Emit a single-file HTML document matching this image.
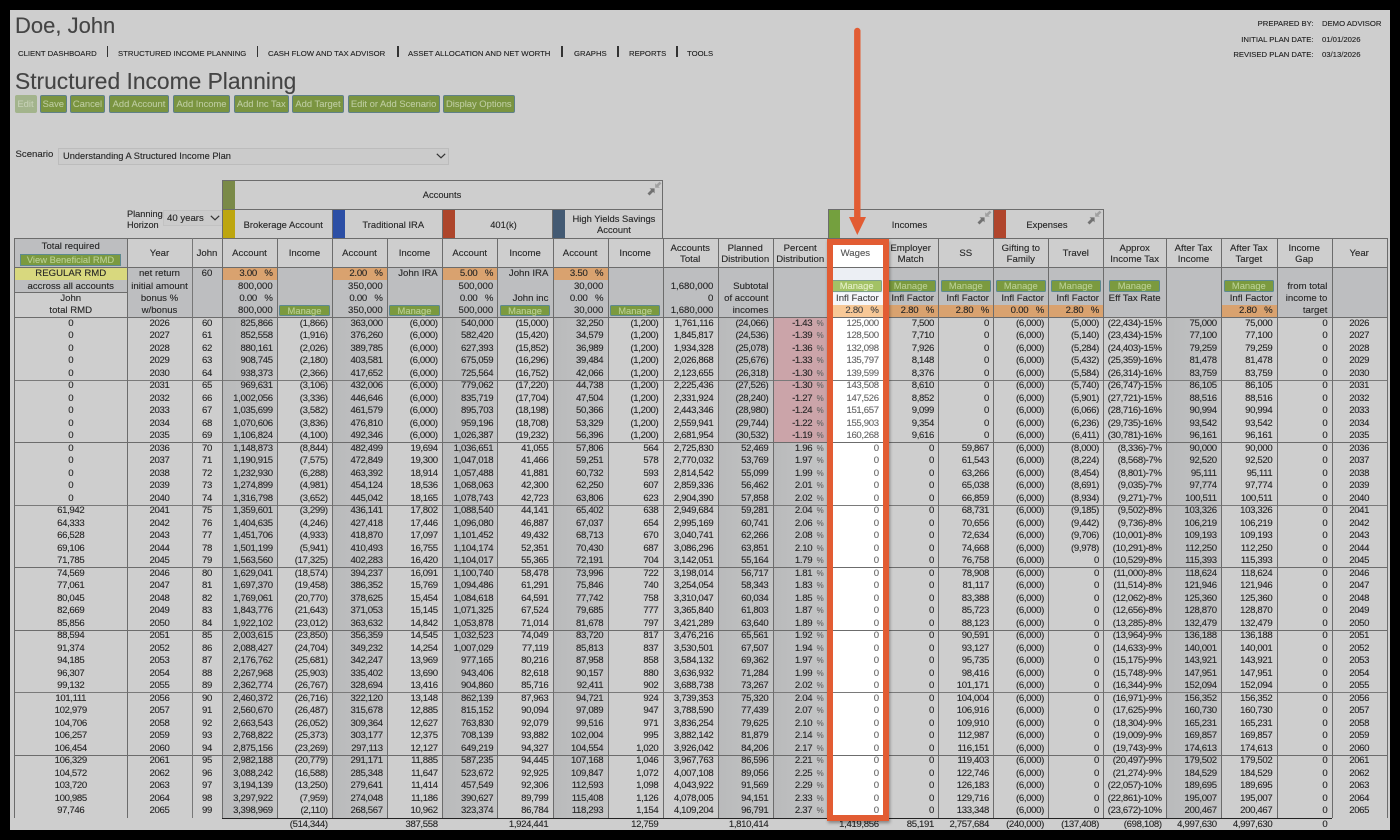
<!DOCTYPE html>
<html><head><meta charset="utf-8"><title>Structured Income Planning</title>
<style>
html,body{margin:0;padding:0;background:#000;width:1400px;height:840px;overflow:hidden}
#p{position:absolute;left:10px;top:9.5px;width:1380px;height:820.5px;background:#cecece}
#w{position:absolute;left:0;top:0;width:1400px;height:840px;overflow:hidden;font-family:"Liberation Sans",Arial,sans-serif;color:#262626;font-size:9.6px;-webkit-text-stroke:.12px currentColor}
#w div{position:absolute;white-space:nowrap}
.n{font-size:7.75px;top:48.5px;line-height:10px;color:#222}
.ns{width:1.5px;height:11px;top:46px;background:#333}
.b{top:95px;height:16.4px;line-height:16.4px;text-align:center;background:#7a9440;border:1px solid #5f8088;border-radius:2px;color:#bccb9e;font-size:9.4px}
.rh{font-size:7.7px;color:#222;line-height:10px}
.bg{background:#bdbec0}
.dk{background:linear-gradient(90deg,#b9babb,#c3c4c5)}
.or{background:#d9a26f}
.hl{background:#6c6c6c;height:1px}
.v{background:#6c6c6c;width:1px}
.c0{left:14.5px;width:112.5px}.c1{left:127px;width:65px}.c2{left:192px;width:30px}
.a1{left:222px;width:55px}.i1{left:277px;width:55px}.a2{left:332px;width:55px}.i2{left:387px;width:55px}
.a3{left:442px;width:55.5px}.i3{left:497.5px;width:55.2px}.a4{left:552.7px;width:54.9px}.i4{left:607.6px;width:55.1px}
.tt{left:662.7px;width:55px}.pl{left:717.7px;width:55px}.pc{left:772.7px;width:55px}.wg{left:827.7px;width:55.3px}
.em{left:883px;width:55.3px}.ss{left:938.3px;width:55px}.gf{left:993.3px;width:55px}.tr{left:1048.3px;width:55px}
.tx{left:1103.3px;width:62.7px}.ai{left:1166px;width:55px}.tg{left:1221px;width:55.7px}.gp{left:1276.7px;width:55px}.y2{left:1331.7px;width:55px}
.R{text-align:right;padding-right:4.3px;box-sizing:border-box}
.C{text-align:center}
.d{top:317.5px;line-height:12.5px;letter-spacing:-.35px}
.f{top:818.5px;line-height:12.5px;letter-spacing:-.35px}
.t1{top:268.3px;line-height:12.4px}.t2{top:280.8px;line-height:12.4px}.t3{top:293px;line-height:12.4px}.t4{top:305.4px;line-height:12.4px}
.h1{top:238.5px;line-height:29px}.h2{top:242.6px;line-height:11px}
.pp{word-spacing:5px;letter-spacing:-.25px}
.m{display:inline-block;box-sizing:border-box;width:50.6px;height:11.6px;line-height:10px;background:#7b9a3f;border:1px solid #5d8a90;border-radius:1.5px;color:#b9cf93;font-size:9.4px;vertical-align:top;margin-top:-.6px}
.sw{width:12.5px;height:28.5px;top:209.5px}
.lb{font-size:9.4px;text-align:center}
</style></head><body>
<div id="w">
<div id="p"></div>

<div style="left:15px;top:13px;font-size:22px;line-height:26px;color:#444">Doe, John</div>
<div style="left:15px;top:68px;font-size:22.8px;line-height:27px;color:#444">Structured Income Planning</div>

<div class="n" style="left:18px">CLIENT DASHBOARD</div><div class="ns" style="left:106.5px"></div>
<div class="n" style="left:118px">STRUCTURED INCOME PLANNING</div><div class="ns" style="left:256.5px"></div>
<div class="n" style="left:268px">CASH FLOW AND TAX ADVISOR</div><div class="ns" style="left:397px"></div>
<div class="n" style="left:408px">ASSET ALLOCATION AND NET WORTH</div><div class="ns" style="left:561px"></div>
<div class="n" style="left:574px">GRAPHS</div><div class="ns" style="left:617px"></div>
<div class="n" style="left:629px">REPORTS</div><div class="ns" style="left:676px"></div>
<div class="n" style="left:687px">TOOLS</div>

<div class="rh" style="right:86.5px;top:18.5px">PREPARED BY:</div><div class="rh" style="left:1322px;top:18.5px">DEMO ADVISOR</div>
<div class="rh" style="right:86.5px;top:34.5px">INITIAL PLAN DATE:</div><div class="rh" style="left:1322px;top:34.5px">01/01/2026</div>
<div class="rh" style="right:86.5px;top:50px">REVISED PLAN DATE:</div><div class="rh" style="left:1322px;top:50px">03/13/2026</div>

<div class="b" style="left:14.5px;width:20px;background:#a3b48c;border-color:#a3b48c;color:#c6d0b6">Edit</div>
<div class="b" style="left:39.6px;width:25.5px">Save</div>
<div class="b" style="left:70px;width:33px">Cancel</div>
<div class="b" style="left:109px;width:58px">Add Account</div>
<div class="b" style="left:173px;width:55px">Add Income</div>
<div class="b" style="left:233.5px;width:53.5px">Add Inc Tax</div>
<div class="b" style="left:292px;width:50px">Add Target</div>
<div class="b" style="left:347.6px;width:90px">Edit or Add Scenario</div>
<div class="b" style="left:442.8px;width:70px">Display Options</div>

<div style="left:15.5px;top:149px;line-height:11px;font-size:9.6px">Scenario</div>
<div style="left:58px;top:148px;width:389px;height:14.6px;line-height:15px;background:#cbcbcb;border:1px solid #bcbcbc;font-size:9.3px"><span style="margin-left:4px">Understanding A Structured Income Plan</span></div>
<svg style="position:absolute;left:436px;top:153px" width="10" height="6"><path d="M.8 .8L5 4.8L9.2 .8" fill="none" stroke="#333" stroke-width="1.2"/></svg>

<div style="left:127px;top:208.6px;line-height:11.4px;font-size:9.2px">Planning<br>Horizon</div>
<div style="left:163px;top:209.5px;width:57.5px;height:14px;line-height:15px;background:#cbcbcb;border:1px solid #c2c2c2;font-size:9.6px"><span style="margin-left:3px">40 years</span></div>
<svg style="position:absolute;left:210px;top:215px" width="10" height="6"><path d="M.8 .8L5 4.8L9.2 .8" fill="none" stroke="#333" stroke-width="1.2"/></svg>

<!-- group headers -->
<div style="left:222px;top:180px;width:12.5px;height:29.5px;background:#7a8a48"></div>
<div class="sw" style="left:222px;background:#bda60f"></div>
<div class="sw" style="left:332px;background:#2c4fa5"></div>
<div class="sw" style="left:442px;background:#ad452b"></div>
<div class="sw" style="left:552.7px;background:#435a73"></div>
<div class="sw" style="left:827.7px;background:#74a03e"></div>
<div class="sw" style="left:993.3px;background:#b0452c"></div>
<div class="hl" style="left:222px;top:180px;width:441px"></div>
<div class="hl" style="left:222px;top:209px;width:441px"></div>
<div class="hl" style="left:828px;top:209px;width:276px"></div>
<div class="v" style="left:222px;top:180px;height:58px"></div>
<div class="v" style="left:662px;top:180px;height:58px"></div>
<div class="v" style="left:332px;top:209px;height:29px"></div>
<div class="v" style="left:442px;top:209px;height:29px"></div>
<div class="v" style="left:552px;top:209px;height:29px"></div>
<div class="v" style="left:828px;top:209px;height:29px"></div>
<div class="v" style="left:993px;top:209px;height:29px"></div>
<div class="v" style="left:1103px;top:209px;height:29px"></div>
<div class="lb" style="left:222px;width:440px;top:189px;line-height:11px">Accounts</div>
<div class="lb" style="left:234.5px;width:97.5px;top:218.5px;line-height:11px">Brokerage Account</div>
<div class="lb" style="left:344.5px;width:97.5px;top:218.5px;line-height:11px">Traditional IRA</div>
<div class="lb" style="left:454.5px;width:98px;top:218.5px;line-height:11px">401(k)</div>
<div class="lb" style="left:565.2px;width:97.5px;top:212.5px;line-height:11.2px">High Yields Savings<br>Account</div>
<div class="lb" style="left:828px;width:163px;top:218.5px;line-height:11px">Incomes</div>
<div class="lb" style="left:993px;width:108px;top:218.5px;line-height:11px">Expenses</div>
<svg style="position:absolute;left:647px;top:181px" width="15" height="15"><path d="M1.5 13.5L5.5 9.5" stroke="#727272" stroke-width="2.8" fill="none"/><path d="M7.6 7.4H2.6L7.6 12.4Z" fill="#727272"/><path d="M13.5 1.5L9.8 5.2" stroke="#a0a0a0" stroke-width="2.6" fill="none"/><path d="M8.2 6.8H12.8L8.2 2.2Z" fill="#a0a0a0"/></svg>
<svg style="position:absolute;left:977px;top:210px" width="15" height="15"><path d="M1.5 13.5L5.5 9.5" stroke="#727272" stroke-width="2.8" fill="none"/><path d="M7.6 7.4H2.6L7.6 12.4Z" fill="#727272"/><path d="M13.5 1.5L9.8 5.2" stroke="#a0a0a0" stroke-width="2.6" fill="none"/><path d="M8.2 6.8H12.8L8.2 2.2Z" fill="#a0a0a0"/></svg>
<svg style="position:absolute;left:1087px;top:210px" width="15" height="15"><path d="M1.5 13.5L5.5 9.5" stroke="#727272" stroke-width="2.8" fill="none"/><path d="M7.6 7.4H2.6L7.6 12.4Z" fill="#727272"/><path d="M13.5 1.5L9.8 5.2" stroke="#a0a0a0" stroke-width="2.6" fill="none"/><path d="M8.2 6.8H12.8L8.2 2.2Z" fill="#a0a0a0"/></svg>

<!-- backgrounds -->
<div class="bg" style="left:14.5px;top:238px;width:112.5px;height:29.5px"></div>
<div class="bg" style="left:14.5px;top:267.5px;width:1372.2px;height:50px"></div>
<div style="left:14.5px;top:292.5px;width:112.5px;height:25px;background:#cecece"></div>
<div style="left:14.5px;top:267.5px;width:112.5px;height:12.5px;background:#d8d87e"></div>
<div class="or" style="left:222px;top:267.5px;width:55px;height:12.5px"></div>
<div class="or" style="left:332px;top:267.5px;width:55px;height:12.5px"></div>
<div class="or" style="left:442px;top:267.5px;width:55.5px;height:12.5px"></div>
<div class="or" style="left:552.7px;top:267.5px;width:55px;height:12.5px"></div>
<div class="or" style="left:883px;top:305px;width:220.3px;height:12.5px"></div>
<div class="or" style="left:1221px;top:305px;width:55.7px;height:12.5px"></div>
<div class="dk" style="left:222px;top:318px;width:55px;height:500px"></div>
<div class="dk" style="left:332px;top:318px;width:55px;height:500px"></div>
<div class="dk" style="left:442px;top:318px;width:55.5px;height:500px"></div>
<div class="dk" style="left:552.7px;top:318px;width:55px;height:500px"></div>
<div class="dk" style="left:717.7px;top:318px;width:55px;height:500px"></div>
<div class="dk" style="left:772.7px;top:318px;width:55px;height:500px"></div>
<div class="dk" style="left:1166px;top:318px;width:55px;height:500px"></div>
<div style="left:772.7px;top:318px;width:55px;height:124px;background:#cba4a9"></div>
<!-- wages spotlight -->
<div style="left:830px;top:238px;width:55px;height:580px;background:#fff"></div>
<div style="left:833px;top:267.5px;width:50px;height:25px;background:#eceff4"></div>
<div style="left:833px;top:292.5px;width:50px;height:12.5px;background:#f5f6fa"></div>
<div style="left:833px;top:305px;width:50px;height:12.5px;background:#f7c897"></div>

<!-- horizontal lines -->
<div class="hl" style="left:14px;top:238px;width:1373px"></div>
<div class="hl" style="left:14px;top:267px;width:1373px"></div>
<div class="hl" style="left:14px;top:317px;width:1373px"></div>
<div class="hl" style="left:14px;top:292px;width:113px"></div>
<div class="hl" style="left:14px;top:380px;width:1373px;background:#7a7a7a"></div>
<div class="hl" style="left:14px;top:442px;width:1373px"></div>
<div class="hl" style="left:14px;top:505px;width:1373px;background:#7a7a7a"></div>
<div class="hl" style="left:14px;top:567px;width:1373px"></div>
<div class="hl" style="left:14px;top:630px;width:1373px"></div>
<div class="hl" style="left:14px;top:692px;width:1373px;background:#7a7a7a"></div>
<div class="hl" style="left:14px;top:755px;width:1373px"></div>
<div style="left:222px;top:817.5px;width:1110px;height:1.6px;background:#222"></div>
<!-- vertical lines -->
<div class="v" style="left:14px;top:238px;height:580px"></div>
<div class="v" style="left:126.5px;top:238px;height:580px;width:1.5px"></div>
<div class="v" style="left:191.5px;top:238px;height:580px;width:1px;background:#777"></div>
<div class="v" style="left:221.5px;top:238px;height:580px"></div>
<div class="v" style="left:277px;top:238px;height:580px"></div>
<div class="v" style="left:332px;top:238px;height:580px"></div>
<div class="v" style="left:387px;top:238px;height:580px"></div>
<div class="v" style="left:442px;top:238px;height:580px"></div>
<div class="v" style="left:497px;top:238px;height:580px"></div>
<div class="v" style="left:552.5px;top:238px;height:580px"></div>
<div class="v" style="left:607.5px;top:238px;height:580px"></div>
<div class="v" style="left:662.5px;top:238px;height:580px"></div>
<div class="v" style="left:717.5px;top:238px;height:580px"></div>
<div class="v" style="left:772.5px;top:238px;height:580px"></div>
<div class="v" style="left:938px;top:238px;height:580px"></div>
<div class="v" style="left:993px;top:238px;height:580px"></div>
<div class="v" style="left:1048px;top:238px;height:580px"></div>
<div class="v" style="left:1103px;top:238px;height:580px"></div>
<div class="v" style="left:1166px;top:238px;height:580px"></div>
<div class="v" style="left:1221px;top:238px;height:580px"></div>
<div class="v" style="left:1276.5px;top:238px;height:580px"></div>
<div class="v" style="left:1331.5px;top:238px;height:580px"></div>
<div class="v" style="left:1386.5px;top:238px;height:580px"></div>

<!-- header row -->
<div class="c0 C" style="top:241px;line-height:11px">Total required</div>
<div class="C" style="left:20px;width:99px;top:254.3px;height:10px;line-height:10.4px;background:#7b9a3f;border:1px solid #5d8a90;color:#b9cf93;font-size:9.4px">View Beneficial RMD</div>
<div class="c1 C h1">Year</div><div class="c2 C h1">John</div>
<div class="a1 C h1">Account</div><div class="i1 C h1">Income</div>
<div class="a2 C h1">Account</div><div class="i2 C h1">Income</div>
<div class="a3 C h1">Account</div><div class="i3 C h1">Income</div>
<div class="a4 C h1">Account</div><div class="i4 C h1">Income</div>
<div class="tt C h2">Accounts<br>Total</div><div class="pl C h2">Planned<br>Distribution</div><div class="pc C h2">Percent<br>Distribution</div>
<div class="wg C h1" style="color:#555">Wages</div>
<div class="em C h2">Employer<br>Match</div><div class="ss C h1">SS</div><div class="gf C h2">Gifting to<br>Family</div><div class="tr C h1">Travel</div>
<div class="tx C h2">Approx<br>Income Tax</div><div class="ai C h2">After Tax<br>Income</div><div class="tg C h2">After Tax<br>Target</div><div class="gp C h2">Income<br>Gap</div><div class="y2 C h1">Year</div>

<!-- input rows -->
<div class="c0 C t1">REGULAR RMD</div><div class="c0 C t2">accross all accounts</div><div class="c0 C t3">John</div><div class="c0 C t4">total RMD</div>
<div class="c1 C t1">net return</div><div class="c1 C t2">initial amount</div><div class="c1 C t3">bonus %</div><div class="c1 C t4">w/bonus</div>
<div class="c2 C t1">60</div>
<div class="a1 R t1 pp">3.00 %</div><div class="a1 R t2">800,000</div><div class="a1 R t3 pp">0.00 %</div><div class="a1 R t4">800,000</div>
<div class="i1 C t4"><span class="m">Manage</span></div>
<div class="a2 R t1 pp">2.00 %</div><div class="a2 R t2">350,000</div><div class="a2 R t3 pp">0.00 %</div><div class="a2 R t4">350,000</div>
<div class="i2 R t1">John IRA</div><div class="i2 C t4"><span class="m">Manage</span></div>
<div class="a3 R t1 pp">5.00 %</div><div class="a3 R t2">500,000</div><div class="a3 R t3 pp">0.00 %</div><div class="a3 R t4">500,000</div>
<div class="i3 R t1">John IRA</div><div class="i3 R t3">John inc</div><div class="i3 C t4"><span class="m">Manage</span></div>
<div class="a4 R t1 pp">3.50 %</div><div class="a4 R t2">30,000</div><div class="a4 R t3 pp">0.00 %</div><div class="a4 R t4">30,000</div>
<div class="i4 C t4"><span class="m">Manage</span></div>
<div class="tt R t2">1,680,000</div><div class="tt R t3">0</div><div class="tt R t4">1,680,000</div>
<div class="pl R t2">Subtotal</div><div class="pl R t3">of account</div><div class="pl R t4">incomes</div>
<div class="wg C t2" style="left:829px"><span class="m" style="background:#a3c265;color:#e4efc8;border-color:#7da08a">Manage</span></div><div class="wg R t3" style="color:#444">Infl Factor</div><div class="wg R t4 pp" style="color:#444">2.80 %</div>
<div class="em C t2"><span class="m">Manage</span></div><div class="em R t3">Infl Factor</div><div class="em R t4 pp">2.80 %</div>
<div class="ss C t2"><span class="m">Manage</span></div><div class="ss R t3">Infl Factor</div><div class="ss R t4 pp">2.80 %</div>
<div class="gf C t2"><span class="m">Manage</span></div><div class="gf R t3">Infl Factor</div><div class="gf R t4 pp">0.00 %</div>
<div class="tr C t2"><span class="m">Manage</span></div><div class="tr R t3">Infl Factor</div><div class="tr R t4 pp">2.80 %</div>
<div class="tx C t2"><span class="m">Manage</span></div><div class="tx C t3">Eff Tax Rate</div>
<div class="tg C t2"><span class="m">Manage</span></div><div class="tg R t3">Infl Factor</div><div class="tg R t4 pp">2.80 %</div>
<div class="gp R t2">from total</div><div class="gp R t3">income to</div><div class="gp R t4">target</div>

<!-- data -->
<div class="c0 C d">0<br>0<br>0<br>0<br>0<br>0<br>0<br>0<br>0<br>0<br>0<br>0<br>0<br>0<br>0<br>61,942<br>64,333<br>66,528<br>69,106<br>71,785<br>74,569<br>77,061<br>80,045<br>82,669<br>85,856<br>88,594<br>91,374<br>94,185<br>96,307<br>99,132<br>101,111<br>102,979<br>104,706<br>106,257<br>106,454<br>106,329<br>104,572<br>103,720<br>100,985<br>97,746</div>
<div class="c1 C d">2026<br>2027<br>2028<br>2029<br>2030<br>2031<br>2032<br>2033<br>2034<br>2035<br>2036<br>2037<br>2038<br>2039<br>2040<br>2041<br>2042<br>2043<br>2044<br>2045<br>2046<br>2047<br>2048<br>2049<br>2050<br>2051<br>2052<br>2053<br>2054<br>2055<br>2056<br>2057<br>2058<br>2059<br>2060<br>2061<br>2062<br>2063<br>2064<br>2065</div>
<div class="c2 C d">60<br>61<br>62<br>63<br>64<br>65<br>66<br>67<br>68<br>69<br>70<br>71<br>72<br>73<br>74<br>75<br>76<br>77<br>78<br>79<br>80<br>81<br>82<br>83<br>84<br>85<br>86<br>87<br>88<br>89<br>90<br>91<br>92<br>93<br>94<br>95<br>96<br>97<br>98<br>99</div>
<div class="a1 R d">825,866<br>852,558<br>880,161<br>908,745<br>938,373<br>969,631<br>1,002,056<br>1,035,699<br>1,070,606<br>1,106,824<br>1,148,873<br>1,190,915<br>1,232,930<br>1,274,899<br>1,316,798<br>1,359,601<br>1,404,635<br>1,451,706<br>1,501,199<br>1,563,560<br>1,629,041<br>1,697,370<br>1,769,061<br>1,843,776<br>1,922,102<br>2,003,615<br>2,088,427<br>2,176,762<br>2,267,968<br>2,362,774<br>2,460,372<br>2,560,670<br>2,663,543<br>2,768,822<br>2,875,156<br>2,982,188<br>3,088,242<br>3,194,139<br>3,297,922<br>3,398,969</div>
<div class="i1 R d">(1,866)<br>(1,916)<br>(2,026)<br>(2,180)<br>(2,366)<br>(3,106)<br>(3,336)<br>(3,582)<br>(3,836)<br>(4,100)<br>(8,844)<br>(7,575)<br>(6,288)<br>(4,981)<br>(3,652)<br>(3,299)<br>(4,246)<br>(4,933)<br>(5,941)<br>(17,325)<br>(18,574)<br>(19,458)<br>(20,770)<br>(21,643)<br>(23,012)<br>(23,850)<br>(24,704)<br>(25,681)<br>(25,903)<br>(26,767)<br>(26,716)<br>(26,487)<br>(26,052)<br>(25,373)<br>(23,269)<br>(20,779)<br>(16,588)<br>(13,250)<br>(7,959)<br>(2,110)</div>
<div class="a2 R d">363,000<br>376,260<br>389,785<br>403,581<br>417,652<br>432,006<br>446,646<br>461,579<br>476,810<br>492,346<br>482,499<br>472,849<br>463,392<br>454,124<br>445,042<br>436,141<br>427,418<br>418,870<br>410,493<br>402,283<br>394,237<br>386,352<br>378,625<br>371,053<br>363,632<br>356,359<br>349,232<br>342,247<br>335,402<br>328,694<br>322,120<br>315,678<br>309,364<br>303,177<br>297,113<br>291,171<br>285,348<br>279,641<br>274,048<br>268,567</div>
<div class="i2 R d">(6,000)<br>(6,000)<br>(6,000)<br>(6,000)<br>(6,000)<br>(6,000)<br>(6,000)<br>(6,000)<br>(6,000)<br>(6,000)<br>19,694<br>19,300<br>18,914<br>18,536<br>18,165<br>17,802<br>17,446<br>17,097<br>16,755<br>16,420<br>16,091<br>15,769<br>15,454<br>15,145<br>14,842<br>14,545<br>14,254<br>13,969<br>13,690<br>13,416<br>13,148<br>12,885<br>12,627<br>12,375<br>12,127<br>11,885<br>11,647<br>11,414<br>11,186<br>10,962</div>
<div class="a3 R d">540,000<br>582,420<br>627,393<br>675,059<br>725,564<br>779,062<br>835,719<br>895,703<br>959,196<br>1,026,387<br>1,036,651<br>1,047,018<br>1,057,488<br>1,068,063<br>1,078,743<br>1,088,540<br>1,096,080<br>1,101,452<br>1,104,174<br>1,104,017<br>1,100,740<br>1,094,486<br>1,084,618<br>1,071,325<br>1,053,878<br>1,032,523<br>1,007,029<br>977,165<br>943,406<br>904,860<br>862,139<br>815,152<br>763,830<br>708,139<br>649,219<br>587,235<br>523,672<br>457,549<br>390,627<br>323,374</div>
<div class="i3 R d">(15,000)<br>(15,420)<br>(15,852)<br>(16,296)<br>(16,752)<br>(17,220)<br>(17,704)<br>(18,198)<br>(18,708)<br>(19,232)<br>41,055<br>41,466<br>41,881<br>42,300<br>42,723<br>44,141<br>46,887<br>49,432<br>52,351<br>55,365<br>58,478<br>61,291<br>64,591<br>67,524<br>71,014<br>74,049<br>77,119<br>80,216<br>82,618<br>85,716<br>87,963<br>90,094<br>92,079<br>93,882<br>94,327<br>94,445<br>92,925<br>92,306<br>89,799<br>86,784</div>
<div class="a4 R d">32,250<br>34,579<br>36,989<br>39,484<br>42,066<br>44,738<br>47,504<br>50,366<br>53,329<br>56,396<br>57,806<br>59,251<br>60,732<br>62,250<br>63,806<br>65,402<br>67,037<br>68,713<br>70,430<br>72,191<br>73,996<br>75,846<br>77,742<br>79,685<br>81,678<br>83,720<br>85,813<br>87,958<br>90,157<br>92,411<br>94,721<br>97,089<br>99,516<br>102,004<br>104,554<br>107,168<br>109,847<br>112,593<br>115,408<br>118,293</div>
<div class="i4 R d">(1,200)<br>(1,200)<br>(1,200)<br>(1,200)<br>(1,200)<br>(1,200)<br>(1,200)<br>(1,200)<br>(1,200)<br>(1,200)<br>564<br>578<br>593<br>607<br>623<br>638<br>654<br>670<br>687<br>704<br>722<br>740<br>758<br>777<br>797<br>817<br>837<br>858<br>880<br>902<br>924<br>947<br>971<br>995<br>1,020<br>1,046<br>1,072<br>1,098<br>1,126<br>1,154</div>
<div class="tt R d">1,761,116<br>1,845,817<br>1,934,328<br>2,026,868<br>2,123,655<br>2,225,436<br>2,331,924<br>2,443,346<br>2,559,941<br>2,681,954<br>2,725,830<br>2,770,032<br>2,814,542<br>2,859,336<br>2,904,390<br>2,949,684<br>2,995,169<br>3,040,741<br>3,086,296<br>3,142,051<br>3,198,014<br>3,254,054<br>3,310,047<br>3,365,840<br>3,421,289<br>3,476,216<br>3,530,501<br>3,584,132<br>3,636,932<br>3,688,738<br>3,739,353<br>3,788,590<br>3,836,254<br>3,882,142<br>3,926,042<br>3,967,763<br>4,007,108<br>4,043,922<br>4,078,005<br>4,109,204</div>
<div class="pl R d">(24,066)<br>(24,536)<br>(25,078)<br>(25,676)<br>(26,318)<br>(27,526)<br>(28,240)<br>(28,980)<br>(29,744)<br>(30,532)<br>52,469<br>53,769<br>55,099<br>56,462<br>57,858<br>59,281<br>60,741<br>62,266<br>63,851<br>55,164<br>56,717<br>58,343<br>60,034<br>61,803<br>63,640<br>65,561<br>67,507<br>69,362<br>71,284<br>73,267<br>75,320<br>77,439<br>79,625<br>81,879<br>84,206<br>86,596<br>89,056<br>91,569<br>94,151<br>96,791</div>
<div class="pc R d" style="padding-right:15.5px">-1.43<br>-1.39<br>-1.36<br>-1.33<br>-1.30<br>-1.30<br>-1.27<br>-1.24<br>-1.22<br>-1.19<br>1.96<br>1.97<br>1.99<br>2.01<br>2.02<br>2.04<br>2.06<br>2.08<br>2.10<br>1.79<br>1.81<br>1.83<br>1.85<br>1.87<br>1.89<br>1.92<br>1.94<br>1.97<br>1.99<br>2.02<br>2.04<br>2.07<br>2.10<br>2.14<br>2.17<br>2.21<br>2.25<br>2.29<br>2.33<br>2.37</div>
<div class="pc R d" style="color:#666;font-size:8px">%<br>%<br>%<br>%<br>%<br>%<br>%<br>%<br>%<br>%<br>%<br>%<br>%<br>%<br>%<br>%<br>%<br>%<br>%<br>%<br>%<br>%<br>%<br>%<br>%<br>%<br>%<br>%<br>%<br>%<br>%<br>%<br>%<br>%<br>%<br>%<br>%<br>%<br>%<br>%</div>
<div class="wg R d" style="color:#666">125,000<br>128,500<br>132,098<br>135,797<br>139,599<br>143,508<br>147,526<br>151,657<br>155,903<br>160,268<br>0<br>0<br>0<br>0<br>0<br>0<br>0<br>0<br>0<br>0<br>0<br>0<br>0<br>0<br>0<br>0<br>0<br>0<br>0<br>0<br>0<br>0<br>0<br>0<br>0<br>0<br>0<br>0<br>0<br>0</div>
<div class="em R d">7,500<br>7,710<br>7,926<br>8,148<br>8,376<br>8,610<br>8,852<br>9,099<br>9,354<br>9,616<br>0<br>0<br>0<br>0<br>0<br>0<br>0<br>0<br>0<br>0<br>0<br>0<br>0<br>0<br>0<br>0<br>0<br>0<br>0<br>0<br>0<br>0<br>0<br>0<br>0<br>0<br>0<br>0<br>0<br>0</div>
<div class="ss R d">0<br>0<br>0<br>0<br>0<br>0<br>0<br>0<br>0<br>0<br>59,867<br>61,543<br>63,266<br>65,038<br>66,859<br>68,731<br>70,656<br>72,634<br>74,668<br>76,758<br>78,908<br>81,117<br>83,388<br>85,723<br>88,123<br>90,591<br>93,127<br>95,735<br>98,416<br>101,171<br>104,004<br>106,916<br>109,910<br>112,987<br>116,151<br>119,403<br>122,746<br>126,183<br>129,716<br>133,348</div>
<div class="gf R d">(6,000)<br>(6,000)<br>(6,000)<br>(6,000)<br>(6,000)<br>(6,000)<br>(6,000)<br>(6,000)<br>(6,000)<br>(6,000)<br>(6,000)<br>(6,000)<br>(6,000)<br>(6,000)<br>(6,000)<br>(6,000)<br>(6,000)<br>(6,000)<br>(6,000)<br>(6,000)<br>(6,000)<br>(6,000)<br>(6,000)<br>(6,000)<br>(6,000)<br>(6,000)<br>(6,000)<br>(6,000)<br>(6,000)<br>(6,000)<br>(6,000)<br>(6,000)<br>(6,000)<br>(6,000)<br>(6,000)<br>(6,000)<br>(6,000)<br>(6,000)<br>(6,000)<br>(6,000)</div>
<div class="tr R d">(5,000)<br>(5,140)<br>(5,284)<br>(5,432)<br>(5,584)<br>(5,740)<br>(5,901)<br>(6,066)<br>(6,236)<br>(6,411)<br>(8,000)<br>(8,224)<br>(8,454)<br>(8,691)<br>(8,934)<br>(9,185)<br>(9,442)<br>(9,706)<br>(9,978)<br>0<br>0<br>0<br>0<br>0<br>0<br>0<br>0<br>0<br>0<br>0<br>0<br>0<br>0<br>0<br>0<br>0<br>0<br>0<br>0<br>0</div>
<div class="tx R d">(22,434)-15%<br>(23,434)-15%<br>(24,403)-15%<br>(25,359)-16%<br>(26,314)-16%<br>(26,747)-15%<br>(27,721)-15%<br>(28,716)-16%<br>(29,735)-16%<br>(30,781)-16%<br>(8,336)-7%<br>(8,568)-7%<br>(8,801)-7%<br>(9,035)-7%<br>(9,271)-7%<br>(9,502)-8%<br>(9,736)-8%<br>(10,001)-8%<br>(10,291)-8%<br>(10,529)-8%<br>(11,000)-8%<br>(11,514)-8%<br>(12,062)-8%<br>(12,656)-8%<br>(13,285)-8%<br>(13,964)-9%<br>(14,633)-9%<br>(15,175)-9%<br>(15,748)-9%<br>(16,344)-9%<br>(16,971)-9%<br>(17,625)-9%<br>(18,304)-9%<br>(19,009)-9%<br>(19,743)-9%<br>(20,497)-9%<br>(21,274)-9%<br>(22,057)-10%<br>(22,861)-10%<br>(23,672)-10%</div>
<div class="ai R d">75,000<br>77,100<br>79,259<br>81,478<br>83,759<br>86,105<br>88,516<br>90,994<br>93,542<br>96,161<br>90,000<br>92,520<br>95,111<br>97,774<br>100,511<br>103,326<br>106,219<br>109,193<br>112,250<br>115,393<br>118,624<br>121,946<br>125,360<br>128,870<br>132,479<br>136,188<br>140,001<br>143,921<br>147,951<br>152,094<br>156,352<br>160,730<br>165,231<br>169,857<br>174,613<br>179,502<br>184,529<br>189,695<br>195,007<br>200,467</div>
<div class="tg R d">75,000<br>77,100<br>79,259<br>81,478<br>83,759<br>86,105<br>88,516<br>90,994<br>93,542<br>96,161<br>90,000<br>92,520<br>95,111<br>97,774<br>100,511<br>103,326<br>106,219<br>109,193<br>112,250<br>115,393<br>118,624<br>121,946<br>125,360<br>128,870<br>132,479<br>136,188<br>140,001<br>143,921<br>147,951<br>152,094<br>156,352<br>160,730<br>165,231<br>169,857<br>174,613<br>179,502<br>184,529<br>189,695<br>195,007<br>200,467</div>
<div class="gp R d">0<br>0<br>0<br>0<br>0<br>0<br>0<br>0<br>0<br>0<br>0<br>0<br>0<br>0<br>0<br>0<br>0<br>0<br>0<br>0<br>0<br>0<br>0<br>0<br>0<br>0<br>0<br>0<br>0<br>0<br>0<br>0<br>0<br>0<br>0<br>0<br>0<br>0<br>0<br>0</div>
<div class="y2 C d">2026<br>2027<br>2028<br>2029<br>2030<br>2031<br>2032<br>2033<br>2034<br>2035<br>2036<br>2037<br>2038<br>2039<br>2040<br>2041<br>2042<br>2043<br>2044<br>2045<br>2046<br>2047<br>2048<br>2049<br>2050<br>2051<br>2052<br>2053<br>2054<br>2055<br>2056<br>2057<br>2058<br>2059<br>2060<br>2061<br>2062<br>2063<br>2064<br>2065</div>

<!-- footer -->
<div class="i1 R f">(514,344)</div><div class="i2 R f">387,558</div><div class="i3 R f">1,924,441</div><div class="i4 R f">12,759</div>
<div class="pl R f">1,810,414</div><div class="wg R f">1,419,856</div><div class="em R f">85,191</div><div class="ss R f">2,757,684</div>
<div class="gf R f">(240,000)</div><div class="tr R f">(137,408)</div><div class="tx R f">(698,108)</div><div class="ai R f">4,997,630</div><div class="tg R f">4,997,630</div><div class="gp R f">0</div>

<!-- highlight -->
<div style="left:827px;top:238.5px;width:50px;height:570.5px;border:6px solid #e25c33;box-shadow:1px 2px 3px rgba(0,0,0,.35)"></div>
<svg style="position:absolute;left:840px;top:20px" width="36" height="225"><path d="M17.3 11V198" fill="none" stroke="#e25c33" stroke-width="6.4" stroke-linecap="round"/><path d="M9 197H26L17.3 215Z" fill="#e25c33"/></svg>
</div>
</body></html>
